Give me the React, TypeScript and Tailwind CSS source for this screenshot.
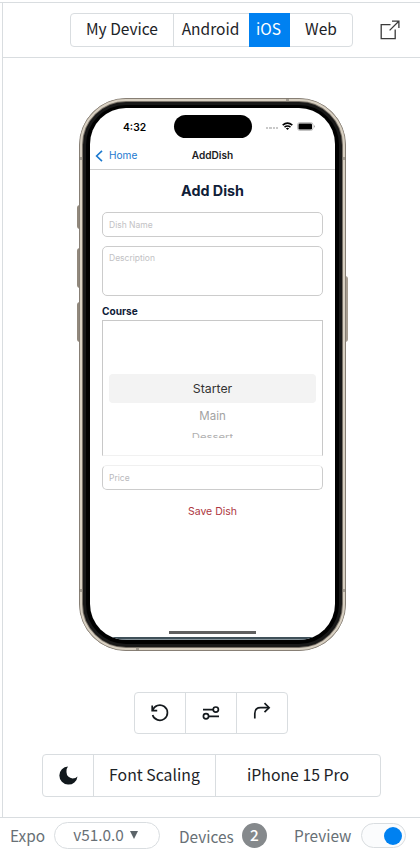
import React from "react";

const line = "border-[#d9dde0]";

function OpenExternalIcon() {
  return (
    <svg width="20" height="20" viewBox="0 0 20 20" fill="none" stroke="#3b3b3b" strokeWidth="1.3">
      <path d="M10.5 4.7H1.2v14h14V9.6" />
      <path d="M9.6 10.4 18.8 1.2M12 1.2h6.9v6.9" />
    </svg>
  );
}

function DeviceTabs() {
  return (
    <div className={`ml-[67px] flex h-[34px] w-[283px] rounded border ${line} text-[15.5px] leading-none text-[#1d2327]`}>
      <div className={`flex w-[103px] items-center justify-center border-r ${line} pb-[2px]`}>My Device</div>
      <div className="flex w-[75px] items-center justify-center pb-[2px] pr-[2px]">Android</div>
      <div className="-my-px flex w-[41px] items-center justify-center bg-[#0081f1] pb-[2px] pr-[2px] text-white">iOS</div>
      <div className="flex flex-1 items-center justify-center pb-[2px]">Web</div>
    </div>
  );
}

function StatusBar() {
  return (
    <div className="flex h-[38px] items-start pl-[33px]">
      <span className="mt-[13px] w-[51px] text-[10.3px] font-semibold leading-[12px] text-black">4:32</span>
      <div className="mt-[7px] h-[23px] w-[78px] rounded-full bg-black" />
      <div className="ml-[14px] mt-[19px] flex gap-[1px]">
        {[0, 1, 2, 3].map((i) => (
          <i key={i} className="h-[2px] w-[2.3px] bg-[#c9c9c9]" />
        ))}
      </div>
      <svg className="ml-[4px] mt-[14px]" width="11" height="9" viewBox="0 0 11 9" fill="none" stroke="#000">
        <path d="M.7 3.1Q5.5-.9 10.3 3.1" strokeWidth="1.7" />
        <path d="M2.5 5.2q3-2.4 6 0" strokeWidth="1.5" />
        <path d="m3.8 6.3 1.7 1.8 1.7-1.8q-1.7-1.2-3.4 0Z" fill="#000" stroke="none" />
      </svg>
      <svg className="ml-[4px] mt-[14px]" width="18" height="9" viewBox="0 0 18 9">
        <rect x=".5" y=".5" width="15.5" height="8" rx="2.4" fill="none" stroke="#b4b4b4" strokeWidth=".8" />
        <rect x="1.5" y="1.6" width="13.5" height="5.9" rx="1.2" />
        <path d="M17 3.2v2.4q.9-.4.9-1.2T17 3.2Z" fill="#999" />
      </svg>
    </div>
  );
}

function Screen() {
  return (
    <div className="flex h-full flex-col overflow-hidden rounded-[36px] bg-white font-['Inter','Liberation_Sans',sans-serif]">
      <StatusBar />
      <div className="grid h-[24px] shrink-0 grid-cols-3 items-start border-b border-[#cfcfcf] px-[5px] text-[10.1px] leading-[14px]">
        <div className="mt-[3px] flex items-center gap-[6px] text-[#1c79cf]">
          <svg width="8" height="12" viewBox="0 0 8 12" fill="none" stroke="currentColor" strokeWidth="1.6">
            <path d="M7 .8 1.6 6 7 11.2" />
          </svg>
          <span className="-mt-px">Home</span>
        </div>
        <div className="mt-[2px] text-center font-semibold text-[#1c1c1e]">AddDish</div>
      </div>
      <div className="flex flex-1 flex-col px-[12px]">
        <h1 className="mt-[12px] text-center text-[14.3px] font-bold leading-[18px] text-[#0f2038]">Add Dish</h1>
        <div className="mt-[12px] h-[25px] rounded-[5px] border border-[#ccc] px-[6px] text-[8.5px] leading-[24px] text-[#c2c2c4]">Dish Name</div>
        <div className="mt-[9px] h-[50px] rounded-[5px] border border-[#ccc] px-[6px] pt-[5px] text-[8.5px] leading-[12px] text-[#c2c2c4]">Description</div>
        <div className="mt-[8px] text-[10.1px] font-bold leading-[14px] text-[#0f2038]">Course</div>
        <div className="mt-[2px] flex h-[136px] flex-col items-center border border-b-[#f1f1f1] border-[#c8c8c8] px-[6px] pt-[53px]">
          <div className="h-[29px] w-full rounded-[4px] bg-[#f3f3f3] text-center text-[12.3px] leading-[29px] text-[#333]">Starter</div>
          <div className="mt-[4px] text-[11.5px] leading-[18px] text-[#a2a2a2]">Main</div>
          <div className="mt-[7px] h-[6px] overflow-hidden">
            <div className="origin-top scale-y-75 text-[11.3px] leading-[12px] text-[#b0b0b0]">Dessert</div>
          </div>
        </div>
        <div className="mt-[9px] h-[25px] rounded-[5px] border border-[#ccc] border-t-[#f0f0f0] px-[6px] text-[8.5px] leading-[24px] text-[#b9b9bc]">Price</div>
        <div className="mt-[14px] text-center text-[10.5px] leading-[16px] text-[#ae3742]">Save Dish</div>
        <div className="mb-[3px] mt-auto h-[3px] w-[87px] self-center bg-[#606060]" />
      </div>
      <div className="h-[3px] border-b border-[#87949b] bg-[#40515a]" />
    </div>
  );
}

function Phone() {
  return (
    <div className="relative ml-[76px] mt-[40px] h-[553px] w-[267px]">
      <i className="absolute -left-[2px] top-[107px] h-[24px] w-[3px] rounded-l-sm bg-[#91887c]" />
      <i className="absolute -left-[2px] top-[150px] h-[40px] w-[3px] rounded-l-sm bg-[#91887c]" />
      <i className="absolute -left-[2px] top-[204px] h-[40px] w-[3px] rounded-l-sm bg-[#91887c]" />
      <i className="absolute -right-[2px] top-[178px] h-[66px] w-[3px] rounded-r-sm bg-[#a69d91]" />
      <div className="relative h-full rounded-[47px] border border-[#877f75] bg-[#877f75]">
        <div className="h-full rounded-[46px] border-2 border-[#d8d0c2] bg-[#777067] p-px">
          <div className="h-full rounded-[43px] border-[3px] border-[#181818] bg-black px-[4px] pb-[4px] pt-[3px]">
            <Screen />
          </div>
        </div>
      </div>
      <i className="absolute left-0 top-[59px] h-[3px] w-[4px] bg-[#817970]/60" />
      <i className="absolute right-0 top-[59px] h-[3px] w-[4px] bg-[#817970]/60" />
      <i className="absolute bottom-[59px] left-0 h-[3px] w-[4px] bg-[#817970]/60" />
      <i className="absolute bottom-[59px] right-0 h-[3px] w-[4px] bg-[#817970]/60" />
      <i className="absolute right-[57px] top-0 h-[4px] w-[3px] bg-[#817970]/60" />
      <i className="absolute bottom-0 left-[57px] h-[4px] w-[3px] bg-[#817970]/60" />
    </div>
  );
}

function ActionButtons() {
  return (
    <div className={`ml-[131px] mt-[41px] flex h-[42px] w-[154px] rounded border ${line}`}>
      <div className={`flex w-[51px] items-center justify-center border-r ${line}`}>
        <svg width="20" height="20" viewBox="0 0 20 20" fill="none" stroke="#14191d" strokeWidth="1.7">
          <path d="M2.2 2.6v5h5" />
          <path d="M2.6 7.4A7.6 7.6 0 1 1 2.6 12" />
        </svg>
      </div>
      <div className={`flex w-[51px] items-center justify-center border-r ${line}`}>
        <svg width="18" height="14" viewBox="0 0 18 14" fill="none" stroke="#14191d" strokeWidth="1.7">
          <path d="M1 3.6h10M7 10.3h10" />
          <circle cx="13.8" cy="3.6" r="2.6" />
          <circle cx="4" cy="10.3" r="2.6" />
        </svg>
      </div>
      <div className="flex flex-1 items-center justify-center pb-[4px]">
        <svg width="18" height="18" viewBox="0 0 18 18" fill="none" stroke="#14191d" strokeWidth="1.7">
          <path d="M1.8 16.5v-5q0-5.8 5.8-5.8h8.3" />
          <path d="m11.5 1.2 4.6 4.5-4.6 4.5" />
        </svg>
      </div>
    </div>
  );
}

function SettingsButtons() {
  return (
    <div className={`ml-[39px] mt-[20px] flex h-[43px] w-[339px] rounded border ${line} text-[15.8px] leading-none text-[#1d2327]`}>
      <div className={`flex w-[51px] items-center justify-center border-r ${line}`}>
        <svg width="19" height="19" viewBox="0 0 19 19" fill="#11181c">
          <path d="M9 .4A9.1 9.1 0 1 0 18.5 10.4Q16.8 12.4 13.6 12.4A6.1 6.1 0 0 1 7.5 6.2Q7.3 2.4 9 .4Z" />
        </svg>
      </div>
      <div className={`flex w-[122px] items-center justify-center border-r ${line} pb-[2px]`}>Font Scaling</div>
      <div className="flex flex-1 items-center justify-center pb-[2px]">iPhone 15 Pro</div>
    </div>
  );
}

function Footer() {
  return (
    <footer className={`flex h-[37px] items-start border-t ${line} pl-[10px] text-[15.4px] leading-[34px] text-[#687076]`}>
      <span className="w-[44px]">Expo</span>
      <div className={`mt-[4px] flex h-[27px] w-[106px] items-center justify-center gap-[6px] rounded-full border ${line} pb-px pr-[3px] leading-none`}>
        v51.0.0
        <svg width="8" height="8" viewBox="0 0 8 8" fill="#5c6469">
          <path d="M0 0h8L4 8Z" />
        </svg>
      </div>
      <span className="ml-[19px] w-[63px] leading-[36px]">Devices</span>
      <div className="mt-[5px] flex size-[25px] items-center justify-center rounded-full bg-[#85898c] pb-[2px] font-medium leading-none text-white">2</div>
      <span className="ml-[27px] w-[67px]">Preview</span>
      <div className={`mt-[5px] flex h-[25px] w-[45px] items-center justify-end rounded-full border ${line} bg-[#fbfcfd] pr-[3px]`}>
        <div className="size-[18px] rounded-full bg-[#0081f1]" />
      </div>
    </footer>
  );
}

export default function App() {
  return (
    <div className="flex h-[854px] w-[420px] flex-col overflow-hidden bg-white pt-[2px] font-['Noto_Sans_CJK_SC',sans-serif]">
      <div className={`h-px shrink-0 border-t ${line}`} />
      <main className={`ml-[2px] flex-1 border-l ${line}`}>
        <header className={`flex h-[55px] items-center border-b ${line}`}>
          <DeviceTabs />
          <div className="ml-[27px]">
            <OpenExternalIcon />
          </div>
        </header>
        <Phone />
        <ActionButtons />
        <SettingsButtons />
      </main>
      <Footer />
    </div>
  );
}
